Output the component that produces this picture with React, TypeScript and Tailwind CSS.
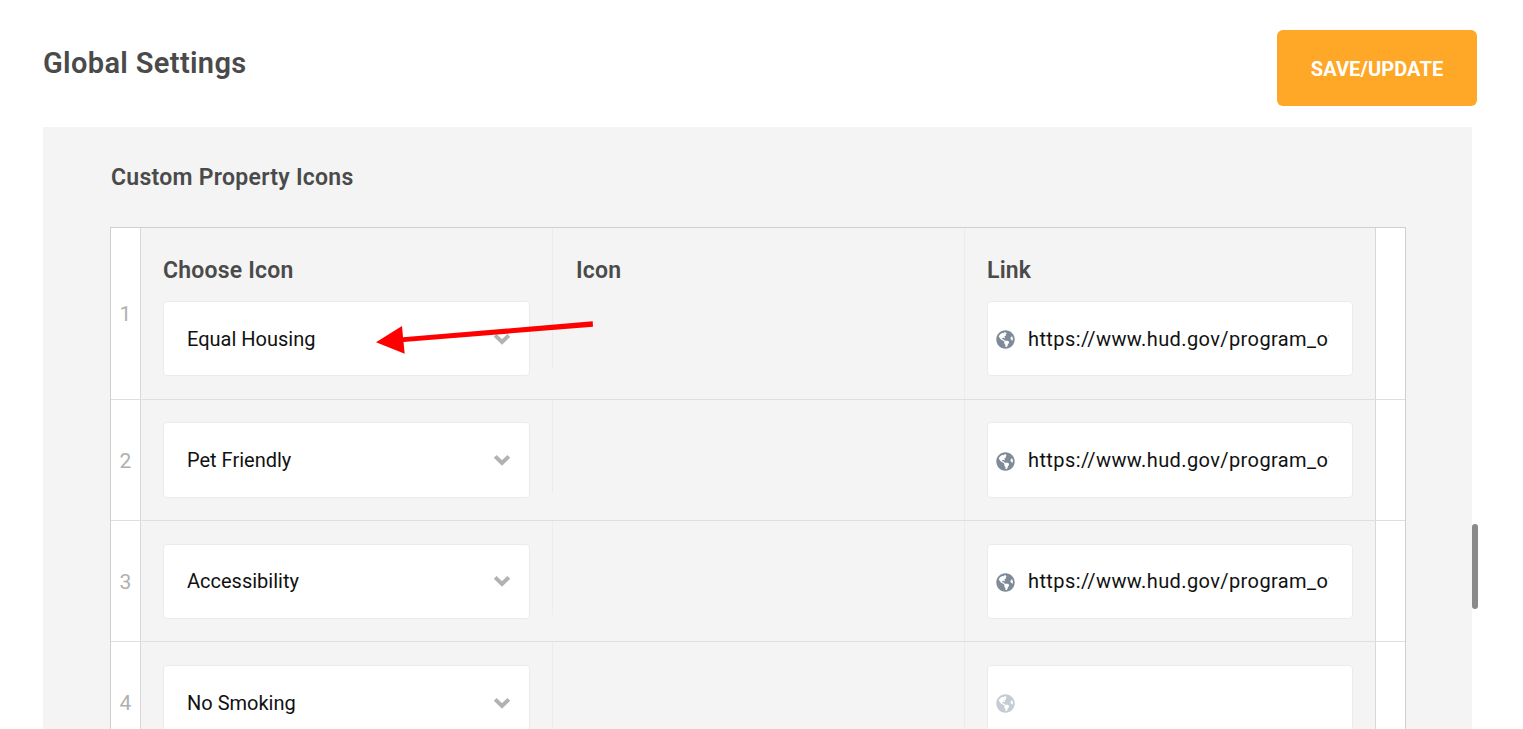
import { FaGlobeAmericas } from "react-icons/fa";

const rows = [
  { n: 1, icon: "Equal Housing", link: "https://www.hud.gov/program_offices/fair_housing" },
  { n: 2, icon: "Pet Friendly", link: "https://www.hud.gov/program_offices/fair_housing" },
  { n: 3, icon: "Accessibility", link: "https://www.hud.gov/program_offices/fair_housing" },
  { n: 4, icon: "No Smoking", link: "" },
];

function Label({ children }: { children: string }) {
  return (
    <div className="mb-[12px] h-[61px] pt-[27px] text-[23px] leading-[32px] font-semibold tracking-[0.2px] text-[#4a4a4a]">
      {children}
    </div>
  );
}

function Chevron() {
  return (
    <svg width="18" height="12" viewBox="0 0 18 12">
      <polyline points="2.2,2.4 9,9 15.8,2.4" fill="none" stroke="#b2b2b2" strokeWidth="4" />
    </svg>
  );
}

function Row({ n, icon, link }: { n: number; icon: string; link: string }) {
  const first = n === 1;
  return (
    <div className="flex border-b border-[#dfdfdf]">
      <div className={`flex w-[29px] shrink-0 justify-center bg-white text-[21px] leading-[28px] text-[#b0b0b0] ${first ? "pt-[72px]" : "pt-[47px]"}`}>
        {n}
      </div>
      <div className={`grid flex-1 grid-cols-[412px_412px_410px] border-x border-[#d8d8d8] bg-[#f4f4f4] ${first ? "h-[171px]" : "h-[120.2px]"}`}>
        <div className={`border-r border-[#ececec] px-[22px] ${first ? "h-[140px]" : "h-[93.4px] pt-[22.4px]"}`}>
          {first && <Label>Choose Icon</Label>}
          <div className={`flex items-center justify-between rounded-[4px] border border-[#ebebeb] bg-white pr-[18px] pl-[23px] ${first ? "h-[75px]" : "h-[75.5px]"}`}>
            <span className="text-[20px] text-[#111]">{icon}</span>
            <Chevron />
          </div>
        </div>
        <div className="border-r border-[#ececec] px-[23px]">
          {first && <Label>Icon</Label>}
        </div>
        <div className={`px-[22px] ${first ? "" : "pt-[22.4px]"}`}>
          {first && <Label>Link</Label>}
          <div className={`flex items-center rounded-[4px] border border-[#ebebeb] bg-white pl-[8px] ${first ? "h-[75px]" : "h-[75.5px]"}`}>
            <FaGlobeAmericas className={`mt-[2px] h-[19px] w-[19px] shrink-0 ${link ? "text-[#7f8b99]" : "text-[#c5ccd3]"}`} />
            <input
              readOnly
              value={link}
              className="ml-[13px] w-[301px] bg-transparent text-[20px] tracking-[0.4px] text-[#111] outline-none"
            />
          </div>
        </div>
      </div>
      <div className="w-[29px] shrink-0 bg-white" />
    </div>
  );
}

export default function App() {
  return (
    <div className="relative h-[729px] overflow-hidden bg-white font-['Roboto',sans-serif]">
      <header className="flex items-start justify-between pt-[30px] pr-[46px] pl-[43px]">
        <h1 className="pt-[13px] text-[29px] leading-[40px] font-semibold tracking-[0.35px] text-[#4a4a4a]">Global Settings</h1>
        <button className="flex h-[76px] w-[200px] items-center justify-center rounded-[6px] bg-[#ffa726] pt-[2px] text-[20px] font-bold tracking-[0.1px] text-white">
          SAVE/UPDATE
        </button>
      </header>
      <main className="mt-[21px] mr-[51px] ml-[43px] h-[620px] bg-[#f4f4f4] pt-[33px] pr-[66px] pl-[67px]">
        <h2 className="h-[67px] pt-[1px] pl-[1px] text-[23px] leading-[34px] font-semibold tracking-[0.27px] text-[#4a4a4a]">Custom Property Icons</h2>
        <div className="border-x border-t border-[#cfcfcf]">
          {rows.map((r) => (
            <Row key={r.n} {...r} />
          ))}
        </div>
      </main>
      <div className="absolute top-[524px] left-[1472px] h-[85px] w-[6px] rounded-[3px] bg-[#8a8a8a]" />
      <svg className="absolute top-[320px] left-[370px]" width="230" height="40" viewBox="0 0 230 40">
        <polygon points="222.7,1.3 223,6.7 33.5,22 34.7,33.7 6,22.3 32,6 33,17.3" fill="#ff0000" />
      </svg>
    </div>
  );
}
